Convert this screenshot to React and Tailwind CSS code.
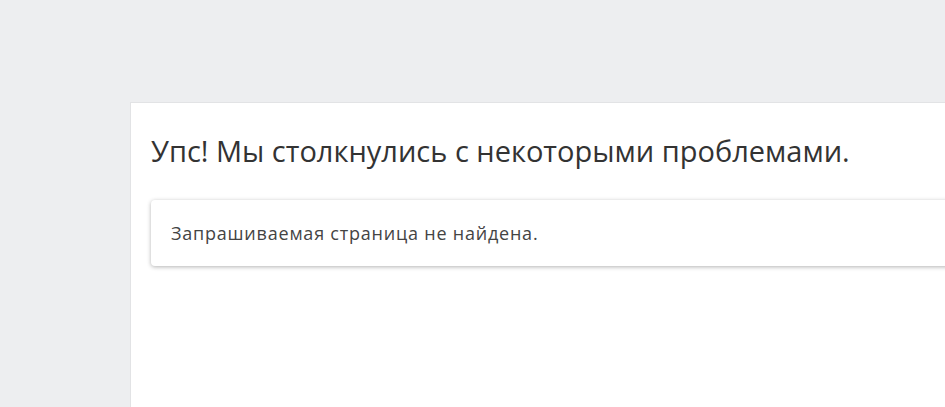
export default function App() {
  return (
    <div className="h-[407px] w-[945px] overflow-hidden bg-[#edeef0]" style={{ fontFamily: '"Open Sans", sans-serif' }}>
      <div className="pt-[102px] pl-[130px]">
        <div className="w-[1000px] h-[400px] bg-white border border-[#e2e3e5] pl-[20px] pt-[28px]">
          <h1 className="text-[29px] leading-[40px] text-[#333333] font-normal">Упс! Мы столкнулись с некоторыми проблемами.</h1>
          <div className="mt-[29px] w-[900px] rounded-[4px] bg-white shadow-[0_1px_4px_rgba(0,0,0,0.3)] px-[20px] py-[21px]">
            <p className="text-[18px] leading-[24px] tracking-[0.78px] text-[#444444]">Запрашиваемая страница не найдена.</p>
          </div>
        </div>
      </div>
    </div>
  );
}
